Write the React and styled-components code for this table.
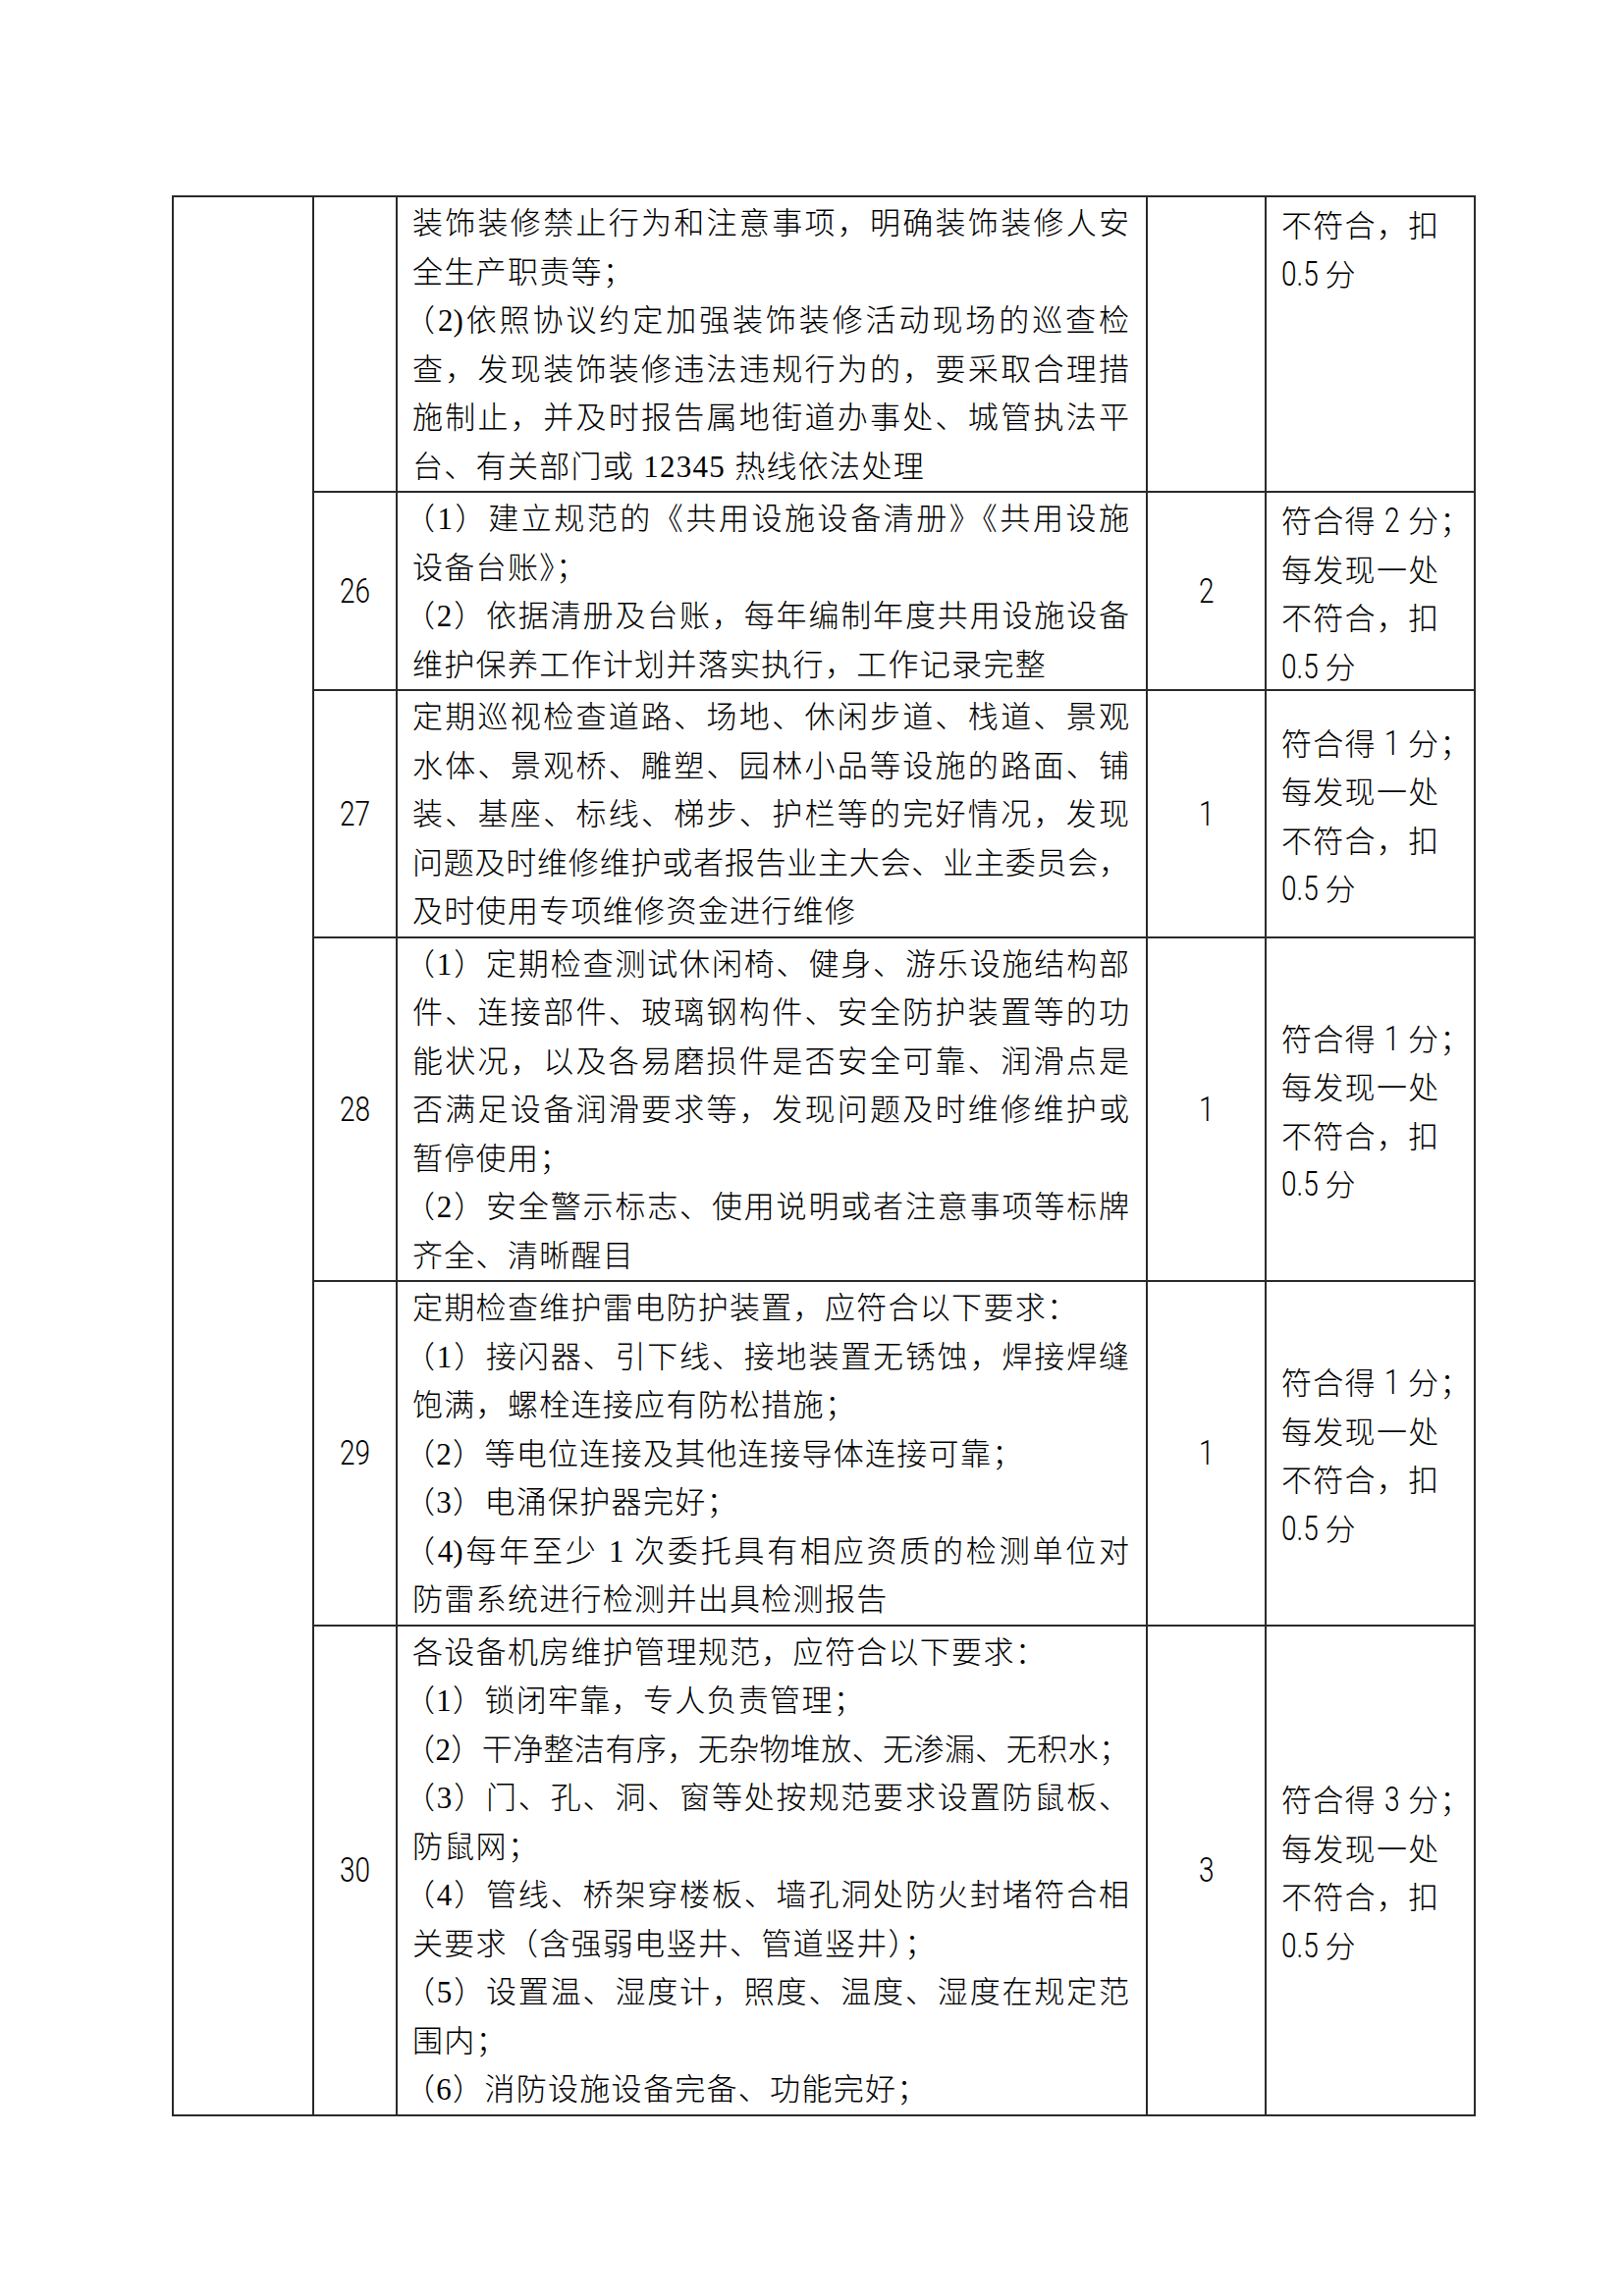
import React from 'react';
import styled, { createGlobalStyle } from 'styled-components';

const Global = createGlobalStyle`
  html, body { margin: 0; padding: 0; background: #fff; }
  body { font-family: "Noto Sans CJK SC", sans-serif; color: #000; }
`;

const Page = styled.div`
  width: 1654px;
  min-height: 2339px;
  box-sizing: border-box;
  padding: 199px 0 0 175px;
  background: #fff;
`;

const Grid = styled.div`
  display: inline-grid;
  grid-template-columns: 143px 85px 764px 121px 213px;
  border-top: 2px solid #2a2a2a;
  border-left: 2px solid #2a2a2a;
`;

const Cell = styled.div`
  box-sizing: border-box;
  border-right: 2px solid #2a2a2a;
  border-bottom: 2px solid #2a2a2a;
  display: flex;
  flex-direction: column;
  justify-content: ${(p) => (p.$top ? 'flex-start' : 'center')};
  padding-top: 2px;
`;

const SideCell = styled(Cell)`
  grid-row: 1 / span 6;
`;

const NumCell = styled(Cell)`
  align-items: center;
  line-height: 50px;
`;

const TextCell = styled(Cell)`
  padding: 2px 17px 0 15px;
  font-family: "Liberation Serif", "Noto Sans CJK SC", serif;
  font-size: 31px;
  font-weight: 300;
`;

const ScoreCell = styled(Cell)`
  padding: 2px 4px 0 15px;
  font-family: "Noto Sans CJK SC", sans-serif;
  font-size: 31px;
  font-weight: 300;
`;

const Line = styled.div`
  height: 49.5px;
  line-height: 49.5px;
  white-space: nowrap;
  margin-left: ${(p) => (p.$lead ? '-8px' : '0')};
  letter-spacing: ${(p) => (p.$full ? '0' : '1.3px')};
  text-align: ${(p) => (p.$full ? 'justify' : 'left')};
  text-align-last: ${(p) => (p.$full ? 'justify' : 'auto')};
`;

const Num = styled.span`
  display: inline-block;
  font-family: "Roboto", "Liberation Sans", sans-serif;
  font-weight: 300;
  font-size: 35px;
  letter-spacing: 0;
  transform: scaleX(0.8);
  transform-origin: ${(p) => (p.$center ? 'center' : 'left center')};
  margin-right: ${(p) => (p.$center ? 0 : -(p.$n || 1) * 3.6)}px;
`;

const scoreLines = (pts) => [
  <>符合得 <Num>{pts}</Num> 分；</>,
  <>每发现一处</>,
  <>不符合，扣</>,
  <><Num $n={3}>0.5</Num> 分</>,
];

const rows = [
  {
    no: '',
    pts: '',
    top: true,
    text: [
      ['装饰装修禁止行为和注意事项，明确装饰装修人安', 1],
      ['全生产职责等；', 0],
      ['（2)依照协议约定加强装饰装修活动现场的巡查检', 1],
      ['查，发现装饰装修违法违规行为的，要采取合理措', 1],
      ['施制止，并及时报告属地街道办事处、城管执法平', 1],
      ['台、有关部门或 12345 热线依法处理', 0],
    ],
    score: [<>不符合，扣</>, <><Num $n={3}>0.5</Num> 分</>],
  },
  {
    no: '26',
    pts: '2',
    text: [
      ['（1）建立规范的《共用设施设备清册》《共用设施', 1],
      ['设备台账》；', 0],
      ['（2）依据清册及台账，每年编制年度共用设施设备', 1],
      ['维护保养工作计划并落实执行，工作记录完整', 0],
    ],
    score: scoreLines('2'),
  },
  {
    no: '27',
    pts: '1',
    text: [
      ['定期巡视检查道路、场地、休闲步道、栈道、景观', 1],
      ['水体、景观桥、雕塑、园林小品等设施的路面、铺', 1],
      ['装、基座、标线、梯步、护栏等的完好情况，发现', 1],
      ['问题及时维修维护或者报告业主大会、业主委员会，', 1],
      ['及时使用专项维修资金进行维修', 0],
    ],
    score: scoreLines('1'),
  },
  {
    no: '28',
    pts: '1',
    text: [
      ['（1）定期检查测试休闲椅、健身、游乐设施结构部', 1],
      ['件、连接部件、玻璃钢构件、安全防护装置等的功', 1],
      ['能状况，以及各易磨损件是否安全可靠、润滑点是', 1],
      ['否满足设备润滑要求等，发现问题及时维修维护或', 1],
      ['暂停使用；', 0],
      ['（2）安全警示标志、使用说明或者注意事项等标牌', 1],
      ['齐全、清晰醒目', 0],
    ],
    score: scoreLines('1'),
  },
  {
    no: '29',
    pts: '1',
    text: [
      ['定期检查维护雷电防护装置，应符合以下要求：', 0],
      ['（1）接闪器、引下线、接地装置无锈蚀，焊接焊缝', 1],
      ['饱满，螺栓连接应有防松措施；', 0],
      ['（2）等电位连接及其他连接导体连接可靠；', 0],
      ['（3）电涌保护器完好；', 0],
      ['（4)每年至少 1 次委托具有相应资质的检测单位对', 1],
      ['防雷系统进行检测并出具检测报告', 0],
    ],
    score: scoreLines('1'),
  },
  {
    no: '30',
    pts: '3',
    text: [
      ['各设备机房维护管理规范，应符合以下要求：', 0],
      ['（1）锁闭牢靠，专人负责管理；', 0],
      ['（2）干净整洁有序，无杂物堆放、无渗漏、无积水；', 1],
      ['（3）门、孔、洞、窗等处按规范要求设置防鼠板、', 1],
      ['防鼠网；', 0],
      ['（4）管线、桥架穿楼板、墙孔洞处防火封堵符合相', 1],
      ['关要求（含强弱电竖井、管道竖井）；', 0],
      ['（5）设置温、湿度计，照度、温度、湿度在规定范', 1],
      ['围内；', 0],
      ['（6）消防设施设备完备、功能完好；', 0],
    ],
    score: scoreLines('3'),
  },
];

export default function App() {
  return (
    <>
      <Global />
      <Page>
        <Grid>
          <SideCell />
          {rows.map((r, i) => (
            <React.Fragment key={i}>
              <NumCell>{r.no && <Num $center>{r.no}</Num>}</NumCell>
              <TextCell $top>
                {r.text.map(([t, full], j) => (
                  <Line key={j} $full={!!full} $lead={t.startsWith('（')}>
                    {t}
                  </Line>
                ))}
              </TextCell>
              <NumCell>{r.pts && <Num $center>{r.pts}</Num>}</NumCell>
              <ScoreCell $top={r.top}>
                {r.score.map((s, j) => (
                  <Line key={j}>{s}</Line>
                ))}
              </ScoreCell>
            </React.Fragment>
          ))}
        </Grid>
      </Page>
    </>
  );
}
